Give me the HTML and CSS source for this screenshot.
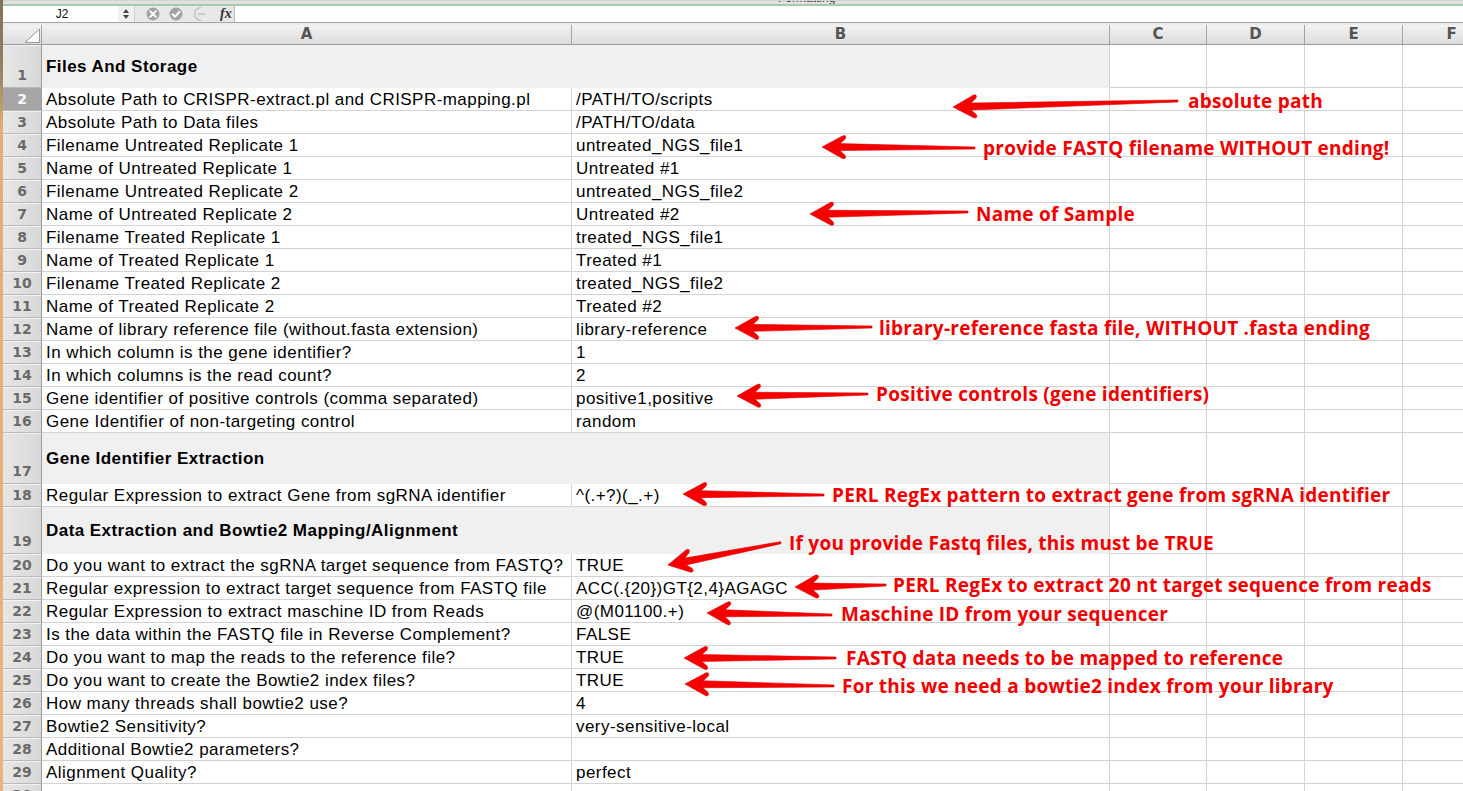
FILE: index.html
```html
<!DOCTYPE html>
<html>
<head>
<meta charset="utf-8">
<title>CRISPR config sheet</title>
<link rel="stylesheet" href="styles.css">
</head>
<body>
<div class="page">
  <div class="desk"></div>
  <div class="window">
    <div class="topstrip"><span class="tb-label">Formatting</span></div>
    <div class="formula">
      <div class="namebox">J2</div>
      <div class="stepper">
        <svg width="8" height="12" viewBox="0 0 8 12"><path d="M4 1 L7 5 L1 5 Z M1 7 L7 7 L4 11 Z" fill="#444"/></svg>
      </div>
      <div class="fbtns">
        <svg class="ficons" width="78" height="16" viewBox="0 0 78 16">
          <circle cx="18" cy="8" r="6.5" fill="#a4a4a4"/>
          <path d="M15.2 5.2 L20.8 10.8 M20.8 5.2 L15.2 10.8" stroke="#fff" stroke-width="1.9" stroke-linecap="round"/>
          <circle cx="41" cy="8" r="6.5" fill="#a4a4a4"/>
          <path d="M37.6 8.3 L40.1 10.7 L44.4 5.8" stroke="#fff" stroke-width="1.9" fill="none" stroke-linecap="round" stroke-linejoin="round"/>
          <path d="M66 1.6 A6.4 6.4 0 0 0 66 14.4" stroke="#bdbdbd" stroke-width="1.3" fill="none"/>
          <path d="M63.5 8 L69 8" stroke="#c9c9c9" stroke-width="2" stroke-linecap="round"/>
        </svg>
        <span class="fx">fx</span>
      </div>
      <div class="finput"></div>
    </div>
    <div class="gap"></div>
    <div class="sheet">
      <div class="grid colhdr">
        <div class="ch corner"><svg width="38" height="19" viewBox="0 0 38 19"><path d="M36.5 4 L36.5 17.5 L22 17.5 Z" fill="#fafafa" stroke="#9a9a9a" stroke-width="1"/></svg></div>
        <div class="ch">A</div><div class="ch">B</div><div class="ch">C</div><div class="ch">D</div><div class="ch">E</div><div class="ch">F</div>
      </div>

      <div class="grid sec h43"><div class="rh">1</div><div class="c title">Files And Storage</div><div class="c"></div><div class="c"></div><div class="c"></div><div class="c"></div></div>
      <div class="grid"><div class="rh sel">2</div><div class="c">Absolute Path to CRISPR-extract.pl and CRISPR-mapping.pl</div><div class="c">/PATH/TO/scripts</div><div class="c"></div><div class="c"></div><div class="c"></div><div class="c"></div></div>
      <div class="grid"><div class="rh">3</div><div class="c">Absolute Path to Data files</div><div class="c">/PATH/TO/data</div><div class="c"></div><div class="c"></div><div class="c"></div><div class="c"></div></div>
      <div class="grid"><div class="rh">4</div><div class="c">Filename Untreated Replicate 1</div><div class="c">untreated_NGS_file1</div><div class="c"></div><div class="c"></div><div class="c"></div><div class="c"></div></div>
      <div class="grid"><div class="rh">5</div><div class="c">Name of Untreated Replicate 1</div><div class="c">Untreated #1</div><div class="c"></div><div class="c"></div><div class="c"></div><div class="c"></div></div>
      <div class="grid"><div class="rh">6</div><div class="c">Filename Untreated Replicate 2</div><div class="c">untreated_NGS_file2</div><div class="c"></div><div class="c"></div><div class="c"></div><div class="c"></div></div>
      <div class="grid"><div class="rh">7</div><div class="c">Name of Untreated Replicate 2</div><div class="c">Untreated #2</div><div class="c"></div><div class="c"></div><div class="c"></div><div class="c"></div></div>
      <div class="grid"><div class="rh">8</div><div class="c">Filename Treated Replicate 1</div><div class="c">treated_NGS_file1</div><div class="c"></div><div class="c"></div><div class="c"></div><div class="c"></div></div>
      <div class="grid"><div class="rh">9</div><div class="c">Name of Treated Replicate 1</div><div class="c">Treated #1</div><div class="c"></div><div class="c"></div><div class="c"></div><div class="c"></div></div>
      <div class="grid"><div class="rh">10</div><div class="c">Filename Treated Replicate 2</div><div class="c">treated_NGS_file2</div><div class="c"></div><div class="c"></div><div class="c"></div><div class="c"></div></div>
      <div class="grid"><div class="rh">11</div><div class="c">Name of Treated Replicate 2</div><div class="c">Treated #2</div><div class="c"></div><div class="c"></div><div class="c"></div><div class="c"></div></div>
      <div class="grid"><div class="rh">12</div><div class="c">Name of library reference file (without.fasta extension)</div><div class="c">library-reference</div><div class="c"></div><div class="c"></div><div class="c"></div><div class="c"></div></div>
      <div class="grid"><div class="rh">13</div><div class="c">In which column is the gene identifier?</div><div class="c">1</div><div class="c"></div><div class="c"></div><div class="c"></div><div class="c"></div></div>
      <div class="grid"><div class="rh">14</div><div class="c">In which columns is the read count?</div><div class="c">2</div><div class="c"></div><div class="c"></div><div class="c"></div><div class="c"></div></div>
      <div class="grid"><div class="rh">15</div><div class="c">Gene identifier of positive controls (comma separated)</div><div class="c">positive1,positive</div><div class="c"></div><div class="c"></div><div class="c"></div><div class="c"></div></div>
      <div class="grid"><div class="rh">16</div><div class="c">Gene Identifier of non-targeting control</div><div class="c">random</div><div class="c"></div><div class="c"></div><div class="c"></div><div class="c"></div></div>
      <div class="grid sec h51"><div class="rh">17</div><div class="c title">Gene Identifier Extraction</div><div class="c"></div><div class="c"></div><div class="c"></div><div class="c"></div></div>
      <div class="grid"><div class="rh">18</div><div class="c">Regular Expression to extract Gene from sgRNA identifier</div><div class="c">^(.+?)(_.+)</div><div class="c"></div><div class="c"></div><div class="c"></div><div class="c"></div></div>
      <div class="grid sec h47"><div class="rh">19</div><div class="c title">Data Extraction and Bowtie2 Mapping/Alignment</div><div class="c"></div><div class="c"></div><div class="c"></div><div class="c"></div></div>
      <div class="grid"><div class="rh">20</div><div class="c">Do you want to extract the sgRNA target sequence from FASTQ?</div><div class="c">TRUE</div><div class="c"></div><div class="c"></div><div class="c"></div><div class="c"></div></div>
      <div class="grid"><div class="rh">21</div><div class="c">Regular expression to extract target sequence from FASTQ file</div><div class="c">ACC(.{20})GT{2,4}AGAGC</div><div class="c"></div><div class="c"></div><div class="c"></div><div class="c"></div></div>
      <div class="grid"><div class="rh">22</div><div class="c">Regular Expression to extract maschine ID from Reads</div><div class="c">@(M01100.+)</div><div class="c"></div><div class="c"></div><div class="c"></div><div class="c"></div></div>
      <div class="grid"><div class="rh">23</div><div class="c">Is the data within the FASTQ file in Reverse Complement?</div><div class="c">FALSE</div><div class="c"></div><div class="c"></div><div class="c"></div><div class="c"></div></div>
      <div class="grid"><div class="rh">24</div><div class="c">Do you want to map the reads to the reference file?</div><div class="c">TRUE</div><div class="c"></div><div class="c"></div><div class="c"></div><div class="c"></div></div>
      <div class="grid"><div class="rh">25</div><div class="c">Do you want to create the Bowtie2 index files?</div><div class="c">TRUE</div><div class="c"></div><div class="c"></div><div class="c"></div><div class="c"></div></div>
      <div class="grid"><div class="rh">26</div><div class="c">How many threads shall bowtie2 use?</div><div class="c">4</div><div class="c"></div><div class="c"></div><div class="c"></div><div class="c"></div></div>
      <div class="grid"><div class="rh">27</div><div class="c">Bowtie2 Sensitivity?</div><div class="c">very-sensitive-local</div><div class="c"></div><div class="c"></div><div class="c"></div><div class="c"></div></div>
      <div class="grid"><div class="rh">28</div><div class="c">Additional Bowtie2 parameters?</div><div class="c"></div><div class="c"></div><div class="c"></div><div class="c"></div><div class="c"></div></div>
      <div class="grid"><div class="rh">29</div><div class="c">Alignment Quality?</div><div class="c">perfect</div><div class="c"></div><div class="c"></div><div class="c"></div><div class="c"></div></div>
      <div class="grid"><div class="rh">30</div><div class="c"></div><div class="c"></div><div class="c"></div><div class="c"></div><div class="c"></div><div class="c"></div></div>
    </div>
  </div>

  <svg class="arrows" width="1463" height="791" viewBox="0 0 1463 791">
    <g fill="#f40000" stroke="#e00000" stroke-width="0.6" stroke-linejoin="round">
      <path transform="translate(953 107) rotate(-1.53)" d="M0 0 L21 -11.5 Q25 -12 23 -8 L18 -3.5 L225 -1 L225 1 L18 3.5 L23 8 Q25 12 21 11.5 Z"/>
      <path transform="translate(822 147) rotate(0.37)" d="M0 0 L21 -11.5 Q25 -12 23 -8 L18 -3.5 L153 -1 L153 1 L18 3.5 L23 8 Q25 12 21 11.5 Z"/>
      <path transform="translate(810 214) rotate(-0.73)" d="M0 0 L21 -11.5 Q25 -12 23 -8 L18 -3.5 L158 -1 L158 1 L18 3.5 L23 8 Q25 12 21 11.5 Z"/>
      <path transform="translate(735 328) rotate(-0.42)" d="M0 0 L21 -11.5 Q25 -12 23 -8 L18 -3.5 L137 -1 L137 1 L18 3.5 L23 8 Q25 12 21 11.5 Z"/>
      <path transform="translate(737 396) rotate(-0.87)" d="M0 0 L21 -11.5 Q25 -12 23 -8 L18 -3.5 L131 -1 L131 1 L18 3.5 L23 8 Q25 12 21 11.5 Z"/>
      <path transform="translate(683 494) rotate(0.41)" d="M0 0 L21 -11.5 Q25 -12 23 -8 L18 -3.5 L141 -1 L141 1 L18 3.5 L23 8 Q25 12 21 11.5 Z"/>
      <path transform="translate(668 565) rotate(-11.2)" d="M0 0 L21 -11.5 Q25 -12 23 -8 L18 -3.5 L115 -1 L115 1 L18 3.5 L23 8 Q25 12 21 11.5 Z"/>
      <path transform="translate(795 587) rotate(-1.26)" d="M0 0 L21 -11.5 Q25 -12 23 -8 L18 -3.5 L91 -1 L91 1 L18 3.5 L23 8 Q25 12 21 11.5 Z"/>
      <path transform="translate(707 613) rotate(0.92)" d="M0 0 L21 -11.5 Q25 -12 23 -8 L18 -3.5 L125 -1 L125 1 L18 3.5 L23 8 Q25 12 21 11.5 Z"/>
      <path transform="translate(684 658)" d="M0 0 L21 -11.5 Q25 -12 23 -8 L18 -3.5 L152 -1 L152 1 L18 3.5 L23 8 Q25 12 21 11.5 Z"/>
      <path transform="translate(685 684) rotate(0.76)" d="M0 0 L21 -11.5 Q25 -12 23 -8 L18 -3.5 L149 -1 L149 1 L18 3.5 L23 8 Q25 12 21 11.5 Z"/>
    </g>
  </svg>

  <div class="note n1">absolute path</div>
  <div class="note n2">provide FASTQ filename WITHOUT ending!</div>
  <div class="note n3">Name of Sample</div>
  <div class="note n4">library-reference fasta file, WITHOUT .fasta ending</div>
  <div class="note n5">Positive controls (gene identifiers)</div>
  <div class="note n6">PERL RegEx pattern to extract gene from sgRNA identifier</div>
  <div class="note n7">If you provide Fastq files, this must be TRUE</div>
  <div class="note n8">PERL RegEx to extract 20 nt target sequence from reads</div>
  <div class="note n9">Maschine ID from your sequencer</div>
  <div class="note n10">FASTQ data needs to be mapped to reference</div>
  <div class="note n11">For this we need a bowtie2 index from your library</div>
</div>
</body>
</html>
```

FILE: styles.css
```css
* { box-sizing: border-box; }
html, body { margin: 0; padding: 0; }
body {
  width: 1463px;
  height: 791px;
  overflow: hidden;
  background: #fff;
  font-family: "Liberation Sans", Arial, sans-serif;
}
.page {
  position: relative;
  display: flex;
  width: 1463px;
  height: 791px;
  overflow: hidden;
}
.desk {
  width: 3px;
  flex: none;
  background: linear-gradient(#7f725c 0, #958162 70px, #e3ae74 130px, #eab57c 100%);
}
.window {
  flex: 1;
  min-width: 0;
  display: flex;
  flex-direction: column;
  overflow: hidden;
}
.topstrip {
  height: 6px;
  flex: none;
  background: #e1e1e1;
  border-top: 1px solid #d4d4d4;
  border-bottom: 2px solid #a8c9ae;
  position: relative;
  overflow: hidden;
}
.tb-label {
  position: absolute;
  left: 775px;
  top: -10px;
  font-size: 12px;
  color: #3a3a3a;
}
.formula {
  height: 17px;
  flex: none;
  display: flex;
  background: #fff;
  border-bottom: 1px solid #a6a6a6;
}
.namebox {
  width: 115px;
  padding-left: 3px;
  font-size: 12px;
  line-height: 16px;
  text-align: center;
  color: #111;
}
.stepper {
  width: 17px;
  background: #f1f1f1;
  border-right: 1px solid #cdcdcd;
  display: flex;
  align-items: center;
  justify-content: center;
}
.fbtns {
  width: 100px;
  background: #e8e8e8;
  border-right: 1px solid #bcbcbc;
  display: flex;
  align-items: center;
}
.ficons { flex: none; display: block; }
.fx {
  margin-left: 7px;
  font-family: "Liberation Serif", serif;
  font-style: italic;
  font-weight: bold;
  font-size: 14px;
  line-height: 16px;
  color: #333;
}
.finput { flex: 1; }
.gap {
  height: 2px;
  flex: none;
  background: #ebebeb;
}
.sheet {
  flex: 1;
  display: flex;
  flex-direction: column;
  overflow: hidden;
}
.grid {
  display: grid;
  grid-template-columns: 39px 530px 538px 97px 98px 98px 98px;
  height: 23px;
  flex: none;
}
.colhdr { height: 20px; }
.ch {
  background: linear-gradient(#f2f2f2, #dddddd);
  border-right: 1px solid #a3a3a3;
  border-bottom: 1px solid #9a9a9a;
  font-family: "DejaVu Sans", sans-serif;
  font-weight: bold;
  font-size: 15px;
  line-height: 19px;
  color: #555;
  text-align: center;
}
.corner { padding: 0; }
.corner svg { display: block; }
.rh {
  background: linear-gradient(to right, #e7e7e7, #d8d8d8);
  border-right: 1px solid #9c9c9c;
  border-bottom: 1px solid #b9b9b9;
  box-shadow: inset 0 1px 0 #f3f3f3;
  font-family: "DejaVu Sans", sans-serif;
  font-weight: bold;
  font-size: 14px;
  color: #6a6a6a;
  display: flex;
  align-items: center;
  justify-content: center;
}
.rh.sel {
  background: #a6a6a6;
  color: #fff;
  box-shadow: none;
}
.c {
  border-right: 1px solid #d3d3d3;
  border-bottom: 1px solid #d3d3d3;
  padding-left: 4px;
  padding-top: 1px;
  display: flex;
  align-items: center;
  white-space: nowrap;
  overflow: hidden;
  font-size: 17px;
  letter-spacing: 0.45px;
  color: #000;
}
.sec .rh {
  align-items: flex-end;
  padding-bottom: 4px;
}
.c.title {
  grid-column: span 2;
  background: #f0f0f0;
  border-bottom-color: #f0f0f0;
  font-weight: bold;
}
.h43 { height: 43px; }
.h51 { height: 51px; }
.h47 { height: 47px; }

.arrows {
  position: absolute;
  left: 0;
  top: 0;
  pointer-events: none;
}
.note {
  position: absolute;
  font-family: "Open Sans", sans-serif;
  font-weight: 700;
  font-size: 19px;
  line-height: 24px;
  letter-spacing: 0.25px;
  color: #f20000;
  white-space: nowrap;
}
.n1 { left: 1188px; top: 89px; }
.n2 { left: 983px; top: 136px; }
.n3 { left: 976px; top: 202px; }
.n4 { left: 879px; top: 316px; }
.n5 { left: 876px; top: 382px; }
.n6 { left: 832px; top: 483px; }
.n7 { left: 789px; top: 531px; }
.n8 { left: 893px; top: 573px; }
.n9 { left: 841px; top: 602px; }
.n10 { left: 846px; top: 646px; }
.n11 { left: 842px; top: 674px; }
```
